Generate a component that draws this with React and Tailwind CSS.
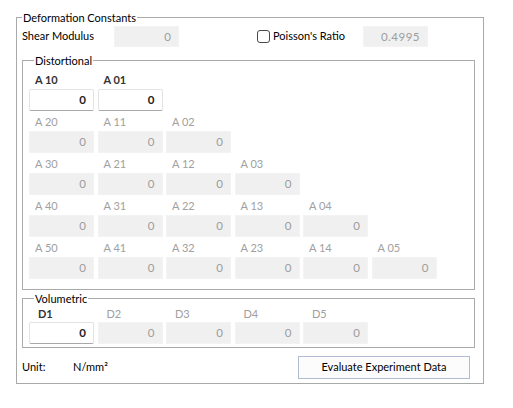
import React from "react";

const font = { fontFamily: 'Lato, "Noto Sans", sans-serif' };

const rows = [
  [["A 10", true], ["A 01", true]],
  [["A 20"], ["A 11"], ["A 02"]],
  [["A 30"], ["A 21"], ["A 12"], ["A 03"]],
  [["A 40"], ["A 31"], ["A 22"], ["A 13"], ["A 04"]],
  [["A 50"], ["A 41"], ["A 32"], ["A 23"], ["A 14"], ["A 05"]],
];

const Field = ({ enabled, value = "0", className = "" }) => (
  <div
    className={
      enabled
        ? "h-[22px] w-[65px] shrink-0 rounded-[2px] border border-[#e3e3e3] border-b-[#a8a8a8] bg-white pr-[7px] text-right text-[11.5px] font-bold leading-[20px] text-[#222] " + className
        : "h-[22px] w-[65px] shrink-0 border border-[#f3f3f3] bg-[#f0f0f0] pr-[7px] text-right text-[11.5px] leading-[20px] text-[#9c9c9c] " + className
    }
  >
    {value}
  </div>
);

const Cell = ({ label, enabled }) => (
  <div className="flex w-[65px] shrink-0 flex-col">
    <div
      className={
        enabled
          ? "h-[16px] pl-[6px] text-[11px] font-bold leading-[16px] text-[#333]"
          : "h-[16px] pl-[6px] text-[11px] leading-[16px] text-[#a0a0a0]"
      }
    >
      {label}
    </div>
    <Field enabled={enabled} className="mt-px" />
  </div>
);

export default function App() {
  return (
    <div className="h-[408px] w-[513px] bg-white text-black" style={font}>
      <div className="pt-[10px] pl-[16px]">
        <fieldset className="h-[374px] w-[468px] border border-[#a9a9a9] px-[5px]">
          <legend className="px-[1px] text-[11px] leading-[15px]">
            Deformation Constants
          </legend>
          <div className="mt-[1px] flex h-[21px] items-center">
            <span className="w-[92px] text-[11px]">Shear Modulus</span>
            <Field className="!h-[21px]" />
            <div className="ml-[78px] flex items-center">
              <span className="h-[13px] w-[13px] rounded-[3px] border border-[#4a4a4a] bg-white" />
              <span className="ml-[3px] w-[90px] text-[11px]">Poisson's Ratio</span>
            </div>
            <Field className="!h-[21px] tracking-[0.5px]" value="0.4995" />
          </div>

          <fieldset className="mt-[6px] h-[237px] w-[453px] border border-[#a9a9a9] pl-[6px]">
            <legend className="ml-[5px] px-[1px] text-[11px] leading-[15px]">Distortional</legend>
            <div className="mt-[4px] flex flex-col gap-[3px]">
              {rows.map((row, i) => (
                <div key={i} className="flex gap-[3.5px]">
                  {row.map(([label, enabled]) => (
                    <Cell key={label} label={label} enabled={enabled} />
                  ))}
                </div>
              ))}
            </div>
          </fieldset>

          <fieldset className="mt-[1px] h-[57px] w-[453px] border border-[#a9a9a9] pl-[6px]">
            <legend className="ml-[5px] px-[1px] text-[11px] leading-[15px]">Volumetric</legend>
            <div className="-mt-[1px] flex gap-[3.5px]">
              <div className="flex w-[65px] flex-col">
                <div className="h-[17px] pl-[9px] text-[11px] font-bold leading-[17px] text-[#333]">D1</div>
                <Field enabled />
              </div>
              {["D2", "D3", "D4", "D5"].map((d) => (
                <div key={d} className="flex w-[65px] flex-col">
                  <div className="h-[17px] pl-[9px] text-[11px] leading-[17px] text-[#a0a0a0]">{d}</div>
                  <Field />
                </div>
              ))}
            </div>
          </fieldset>

          <div className="mt-[8px] flex h-[23px] items-center">
            <span className="w-[51px] text-[11px]">Unit:</span>
            <span className="text-[11px]">N/mm²</span>
            <button className="ml-auto mr-[8px] h-[23px] w-[172px] border border-[#aebbd0] bg-[#fcfcfc] text-[11px] text-black">
              Evaluate Experiment Data
            </button>
          </div>
        </fieldset>
      </div>
    </div>
  );
}
